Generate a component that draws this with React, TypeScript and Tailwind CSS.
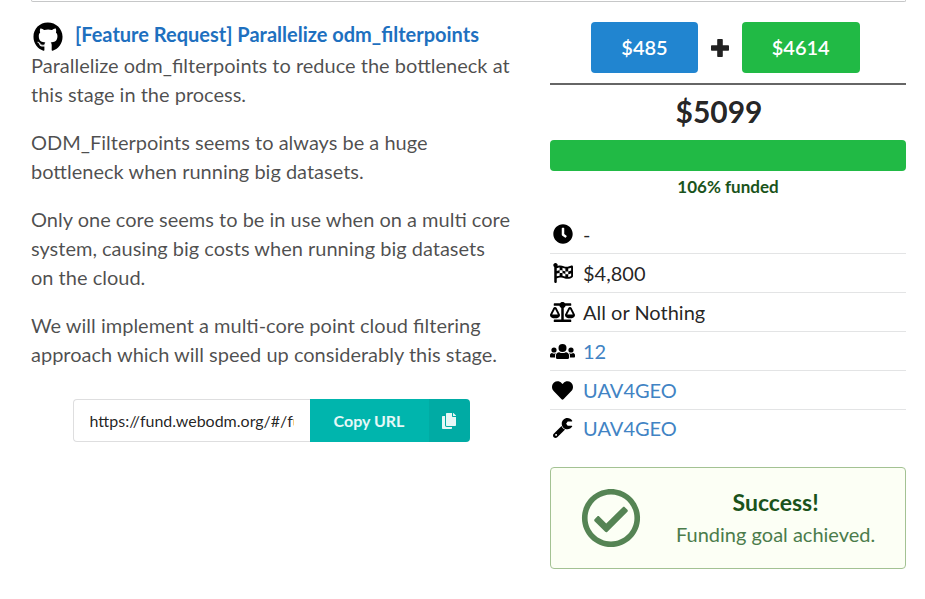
import { useState } from "react";
import type { ReactNode } from "react";
import {
  FaBalanceScale,
  FaCheck,
  FaClock,
  FaCopy,
  FaFlagCheckered,
  FaGithub,
  FaHeart,
  FaRegCheckCircle,
} from "react-icons/fa";

const paragraphs = [
  "Parallelize odm_filterpoints to reduce the bottleneck at this stage in the process.",
  "ODM_Filterpoints seems to always be a huge bottleneck when running big datasets.",
  "Only one core seems to be in use when on a multi core system, causing big costs when running big datasets on the cloud.",
  "We will implement a multi-core point cloud filtering approach which will speed up considerably this stage.",
];

function PlusIcon() {
  return (
    <svg viewBox="0 0 18 18" className="mx-[13px] size-[18px] fill-current" aria-hidden="true">
      <path d="M7 0h4a.8.8 0 0 1 .8.8v5.4h5.4a.8.8 0 0 1 .8.8v4a.8.8 0 0 1-.8.8h-5.4v5.4a.8.8 0 0 1-.8.8H7a.8.8 0 0 1-.8-.8v-5.4H.8A.8.8 0 0 1 0 11V7a.8.8 0 0 1 .8-.8h5.4V.8A.8.8 0 0 1 7 0z" />
    </svg>
  );
}

function UsersIcon() {
  return (
    <svg viewBox="0 0 25 15" className="h-[15px] w-[25px] fill-current" aria-hidden="true">
      <circle cx="12.5" cy="4" r="4" />
      <circle cx="4" cy="6" r="2.6" />
      <circle cx="21" cy="6" r="2.6" />
      <path d="M9.2 8.2c2 1.2 4.600 1.200 6.600 0 1.900 0 3.300 1.500 3.300 3.400v2.200c0 .7-.5 1.200-1.200 1.200H7.100c-.7 0-1.200-.5-1.200-1.200v-2.200c0-1.900 1.400-3.400 3.300-3.400z" />
      <path d="M2 9.100c1.200.7 2.800.7 4 0-.7.8-1 1.700-1 2.700v1.700H.8a.8.800 0 0 1-.8-.8v-1.400c0-1.200.9-2.200 2-2.200z" />
      <path d="M23 9.100c-1.200.7-2.800.7-4 0 .7.8 1 1.700 1 2.700v1.700h4.200a.8.800 0 0 0 .8-.8v-1.400c0-1.200-.9-2.200-2-2.200z" />
    </svg>
  );
}

function WrenchIcon() {
  return (
    <svg viewBox="0 0 512 512" className="size-5 fill-current" aria-hidden="true">
      <path d="M481.156 200c9.3 0 15.12 10.155 10.325 18.124C466.295 259.992 420.419 288 368 288c-79.222 0-143.501-63.974-143.997-143.079C223.505 65.469 288.548-.001 368.002 0c52.362.001 98.196 27.949 123.4 69.743C496.24 77.766 490.523 88 481.154 88H376l-40 56 40 56h105.156zm-171.649 93.003L109.255 493.255c-24.994 24.993-65.515 24.994-90.51 0-24.993-24.994-24.993-65.516 0-90.51L218.991 202.5c16.16 41.197 49.303 74.335 90.516 90.503zM104 432c0-13.255-10.745-24-24-24s-24 10.745-24 24 10.745 24 24 24 24-10.745 24-24z" />
    </svg>
  );
}

function DetailLink({ children }: { children: ReactNode }) {
  return (
    <a href="#" className="text-[#4183c4]">
      {children}
    </a>
  );
}

const details: { id: string; icon: ReactNode; value: ReactNode }[] = [
  { id: "deadline", icon: <FaClock size={20} />, value: "-" },
  { id: "goal", icon: <FaFlagCheckered size={20} />, value: "$4,800" },
  { id: "type", icon: <FaBalanceScale size={25} className="h-5" />, value: "All or Nothing" },
  { id: "backers", icon: <UsersIcon />, value: <DetailLink>12</DetailLink> },
  { id: "promoter", icon: <FaHeart size={21} />, value: <DetailLink>UAV4GEO</DetailLink> },
  { id: "developer", icon: <WrenchIcon />, value: <DetailLink>UAV4GEO</DetailLink> },
];

function CopyUrl() {
  const [copied, setCopied] = useState(false);
  const url = "https://fund.webodm.org/#/fund/parallelize-filterpoints";
  return (
    <div className="mx-auto mt-[30px] flex h-[43px] w-[397px] max-w-full text-base">
      <input
        aria-label="Project URL"
        readOnly
        value={url}
        className="min-w-0 flex-1 rounded-l-[4px] border border-r-0 border-[#dededf] px-4 text-black/87 outline-none"
      />
      <button
        type="button"
        onClick={() => setCopied(true)}
        className="flex w-40 overflow-hidden rounded-r-[4px] bg-[#00b5ad] font-bold text-white/90"
      >
        <span className="flex h-full flex-1 items-center justify-center">Copy URL</span>
        <span className="flex h-full w-[41px] items-center justify-center bg-black/5">
          {copied ? <FaCheck size={16} /> : <FaCopy size={16} />}
        </span>
      </button>
    </div>
  );
}

export default function App() {
  return (
    <div className="bg-white pr-[19px] pb-[30px] pl-[31px] font-['Lato',sans-serif] text-xl text-black/87">
      <div className="h-0.5 rounded-b-[4px] border-x border-b border-[#c6c7c8]" />

      <main className="grid grid-cols-[minmax(0,480fr)_minmax(0,356fr)] items-start gap-[39px] pt-5">
        <section>
          <div className="flex h-[29px] items-start">
            <FaGithub size={30} className="mx-[2px] shrink-0 text-black" />
            <h1 className="ml-[10px] leading-[25px] font-bold whitespace-nowrap">
              <a href="#" className="text-[#1e70bf]">
                [Feature Request] Parallelize odm_filterpoints
              </a>
            </h1>
          </div>
          <div className="flex flex-col gap-[19px] leading-[29px] text-black/70">
            {paragraphs.map((text) => (
              <p key={text}>{text}</p>
            ))}
          </div>
          <CopyUrl />
        </section>

        <section>
          <div className="flex items-center justify-center pr-[5px]">
            <button type="button" className="h-[51px] rounded-[4px] bg-[#2185d0] px-[30px] pb-[2px] font-semibold text-white">
              $485
            </button>
            <PlusIcon />
            <button type="button" className="h-[51px] rounded-[4px] bg-[#21ba45] px-[30px] pb-[2px] font-semibold text-white">
              $4614
            </button>
          </div>
          <div className="mt-[10px] border-t-2 border-[#666]" />
          <div className="mt-2 pr-[18px] text-center text-3xl leading-9 font-bold">$5099</div>
          <div className="mt-[11px] h-[31px] rounded-[4px] bg-[#21ba45]" />
          <div className="mt-1 text-center text-[17px] leading-6 font-bold text-[#1a531b]">106% funded</div>

          <ul className="mt-4 divide-y divide-[#e3e4e5]">
            {details.map((item) => (
              <li key={item.id} className="flex h-[39px] items-center last:h-9">
                <span className="flex w-[25px] items-center justify-center text-black">{item.icon}</span>
                <span className="ml-2">{item.value}</span>
              </li>
            ))}
          </ul>

          <div className="mt-[21px] flex h-[102px] items-center rounded-[4px] border border-[#a3c293] bg-[#fcfff5] px-[30px] text-[#2c662d]">
            <FaRegCheckCircle size={60} className="shrink-0 opacity-80" />
            <div className="flex-1 pl-[35px] text-center whitespace-nowrap">
              <h2 className="text-[23px] leading-7 font-bold text-[#1a531b]">Success!</h2>
              <p className="mt-1 leading-[29px] opacity-85">Funding goal achieved.</p>
            </div>
          </div>
        </section>
      </main>
    </div>
  );
}
